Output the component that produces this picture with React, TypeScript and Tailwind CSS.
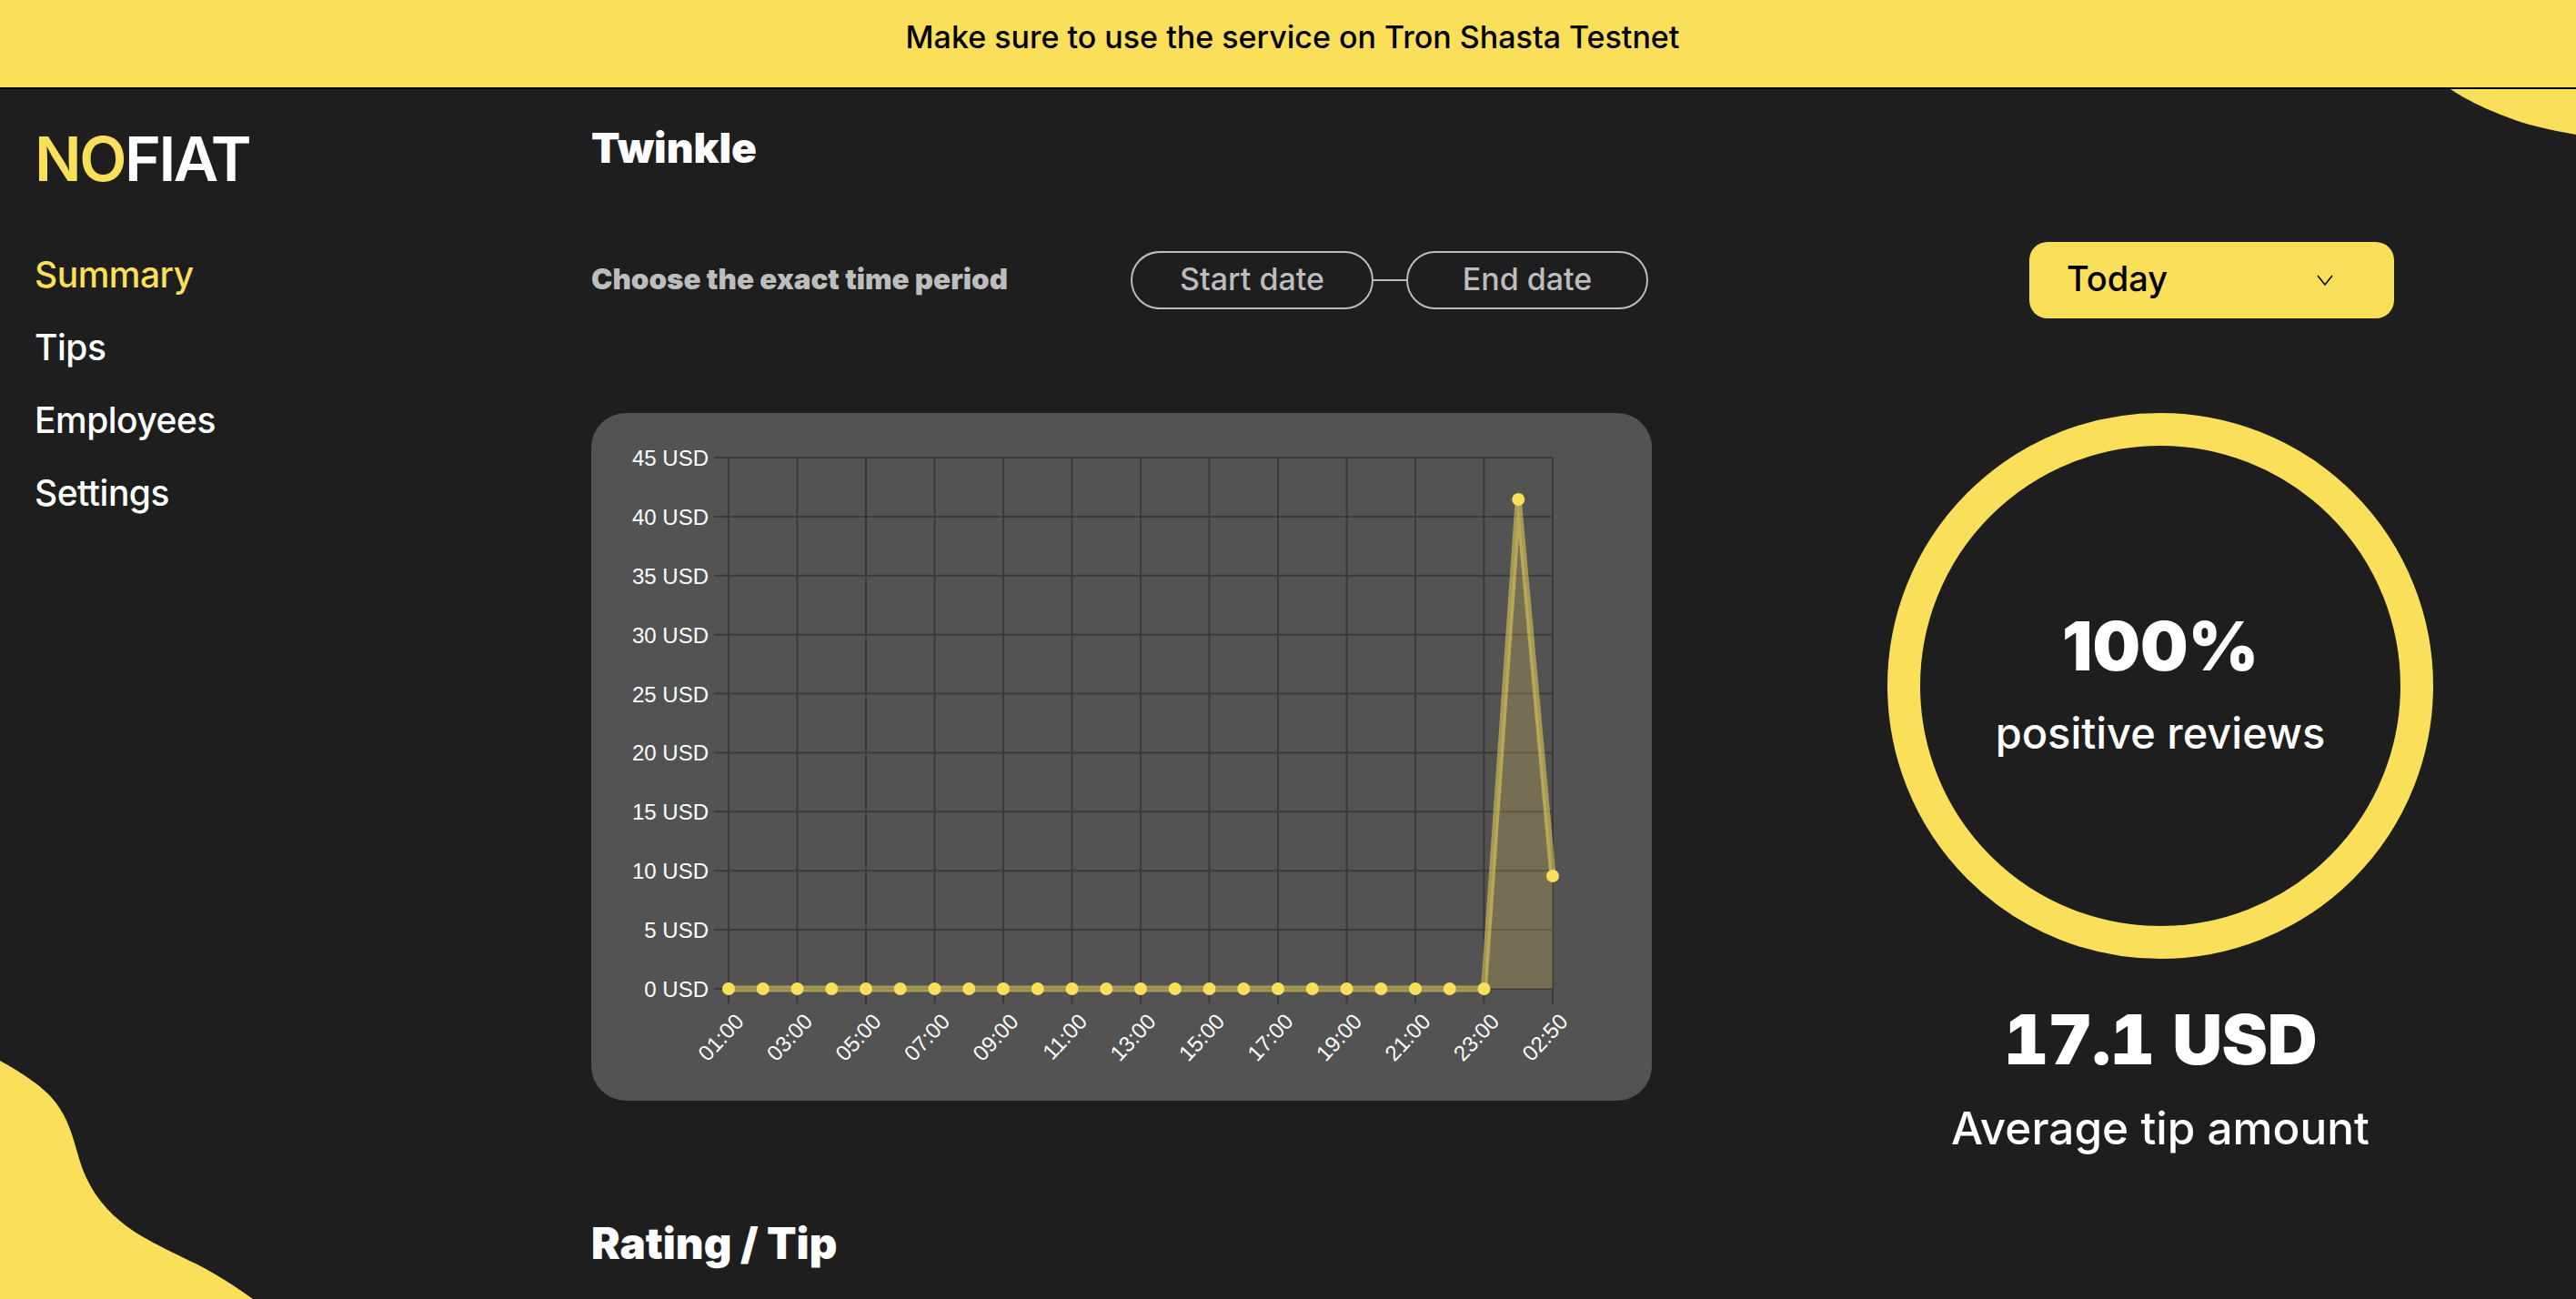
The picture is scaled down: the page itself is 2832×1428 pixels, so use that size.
const yLabels = [45, 40, 35, 30, 25, 20, 15, 10, 5, 0];
const xLabels = ["01:00", "03:00", "05:00", "07:00", "09:00", "11:00", "13:00", "15:00", "17:00", "19:00", "21:00", "23:00", "02:50"];

const LEFT = 801;
const RIGHT = 1707;
const TOP = 503;
const BOTTOM = 1087;
const stepX = (RIGHT - LEFT) / 24;
const stepY = (BOTTOM - TOP) / 9;

const points = Array.from({ length: 25 }, (_, i) => {
  let y = BOTTOM;
  if (i === 23) y = 549;
  if (i === 24) y = 963;
  return [LEFT + i * stepX, y];
});
const linePath = points.map(([x, y]) => `${x},${y}`).join(" ");

function Chart() {
  return (
    <svg viewBox="650 454 1166 756" className="block h-full w-full">
      {yLabels.map((v, i) => (
        <g key={v}>
          <line x1={785} x2={RIGHT} y1={TOP + i * stepY} y2={TOP + i * stepY} stroke="#3a3a3a" strokeWidth={2} />
          <text x={779} y={TOP + i * stepY + 9} textAnchor="end" fill="#ffffff" fontSize={24} fontFamily="'Liberation Sans', sans-serif">
            {v} USD
          </text>
        </g>
      ))}
      {xLabels.map((label, i) => {
        const x = LEFT + i * 2 * stepX;
        return (
          <g key={label}>
            <line x1={x} x2={x} y1={TOP} y2={1103} stroke="#3a3a3a" strokeWidth={2} />
            <text
              x={x + 18}
              y={1124}
              textAnchor="end"
              fill="#ffffff"
              fontSize={24}
              fontFamily="'Liberation Sans', sans-serif"
              transform={`rotate(-47 ${x + 18} 1124)`}
            >
              {label}
            </text>
          </g>
        );
      })}
      <polygon points={`${linePath} ${RIGHT},${BOTTOM} ${LEFT},${BOTTOM}`} fill="#fadf5a" fillOpacity={0.2} />
      <polyline points={linePath} fill="none" stroke="#fadf5a" strokeOpacity={0.5} strokeWidth={7} />
      {points.map(([x, y], i) => (
        <circle key={i} cx={x} cy={y} r={7} fill="#fadf5a" />
      ))}
    </svg>
  );
}

export default function App() {
  return (
    <div className="relative h-[1428px] overflow-hidden bg-[#1e1e1e] text-white [font-family:Inter,sans-serif]">
      {/* Top banner */}
      <div className="flex h-[98px] items-center justify-center border-b-2 border-black bg-[#fadf5a] pl-[10px] pb-[16px] text-[34px] font-medium text-black">
        Make sure to use the service on Tron Shasta Testnet
      </div>

      {/* Corner blobs */}
      <svg viewBox="2682 98 150 52" className="absolute right-0 top-[98px] h-[52px] w-[150px]">
        <path d="M2694 98 C2712 110 2732 120 2765 132 C2785 139 2810 144 2832 148 L2832 98 Z" fill="#fadf5a" />
      </svg>
      <svg viewBox="0 1160 280 268" className="absolute bottom-0 left-0 h-[268px] w-[280px]">
        <path
          d="M0 1166 C25 1180 50 1196 62 1213 C76 1232 80 1250 88 1277 C95 1300 110 1325 133 1343 C150 1358 180 1372 217 1390 C240 1402 260 1415 278 1428 L0 1428 Z"
          fill="#fadf5a"
        />
      </svg>

      <div className="relative flex">
        {/* Sidebar */}
        <aside className="w-[650px] pl-[38px] pt-[36px]">
          <div className="text-[68px] font-semibold leading-[80px] tracking-[-2.5px]">
            <span className="text-[#fadf5a]">NO</span>FIAT
          </div>
          <nav className="mt-[64px] flex flex-col gap-[32px] text-[39px] font-medium leading-[48px] tracking-[-0.5px]">
            <a className="text-[#fadf5a]">Summary</a>
            <a>Tips</a>
            <a>Employees</a>
            <a>Settings</a>
          </nav>
        </aside>

        {/* Main column */}
        <main className="flex-1 pt-[36px]">
          <h1 className="text-[46px] font-black leading-[56px]">Twinkle</h1>

          <div className="mt-[76px] flex items-center">
            <div className="w-[593px] text-[31.4px] font-black text-[#bdbdbd]">Choose the exact time period</div>
            <div className="flex items-center text-[34px] font-medium text-[#bdbdbd]">
              <div className="flex h-[64px] w-[267px] items-center justify-center rounded-full border-2 border-[#bdbdbd] pb-[3px]">
                Start date
              </div>
              <div className="h-[2px] w-[36px] bg-[#bdbdbd]" />
              <div className="flex h-[64px] w-[266px] items-center justify-center rounded-full border-2 border-[#bdbdbd] pb-[3px]">
                End date
              </div>
            </div>
            <div className="ml-[419px] flex h-[84px] w-[401px] items-center justify-between rounded-[20px] bg-[#fadf5a] pb-[4px] pl-[41px] pr-[67px] text-[38px] font-medium text-black">
              Today
              <svg width="18" height="12" viewBox="0 0 18 12" fill="none" className="mt-[4px]">
                <polyline points="1,1 9,11 17,1" stroke="#000" strokeWidth="1.5" />
              </svg>
            </div>
          </div>

          <div className="mt-[104px] flex">
            <div className="h-[756px] w-[1166px] rounded-[38px] bg-[#535353]">
              <Chart />
            </div>

            <div className="ml-[259px] flex w-[600px] flex-col items-center">
              <div className="flex h-[600px] w-[600px] flex-col items-center justify-center rounded-full border-[36px] border-[#fadf5a] pb-[6px]">
                <div className="text-[74px] font-black leading-[92px]">100%</div>
                <div className="mt-[18px] text-[47px] font-medium leading-[64px]">positive reviews</div>
              </div>
              <div className="mt-[42px] text-[76px] font-black leading-[92px] tracking-[-0.5px] tabular-nums">17.1 USD</div>
              <div className="mt-[20px] text-[49.5px] font-medium leading-[64px]">Average tip amount</div>
            </div>
          </div>

          <h2 className="mt-[67px] text-[47.5px] font-black leading-[56px]">Rating / Tip</h2>
        </main>
      </div>
    </div>
  );
}
